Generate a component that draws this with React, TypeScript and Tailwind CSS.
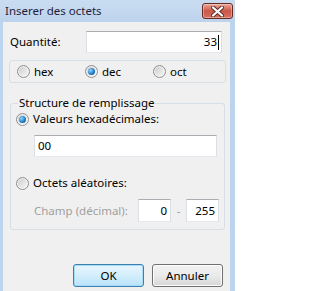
import React from 'react'

const font = { fontFamily: '"Noto Sans", "Open Sans", sans-serif' }

function Radio({ checked, disabled }: { checked?: boolean; disabled?: boolean }) {
  return (
    <span className="relative flex h-[13px] w-[13px] shrink-0 items-center justify-center rounded-full border border-[#8f8f8f] bg-gradient-to-br from-[#e6e6e6] to-[#fbfbfb]">
      <span className="h-[9px] w-[9px] rounded-full bg-gradient-to-br from-[#cfcfcf] to-[#f6f6f6]" />
      {checked && !disabled && (
        <span className="absolute h-[7px] w-[7px] rounded-full bg-[radial-gradient(circle_at_35%_35%,#8fd6ff,#1a77c0_60%,#0d4f8c)]" />
      )}
    </span>
  )
}

function TextBox({ value, className, align = 'left', caret }: { value: string; className: string; align?: 'left' | 'right'; caret?: boolean }) {
  return (
    <div
      className={`flex items-center border border-[#abadb3] border-l-[#dbdfe6] border-r-[#dbdfe6] border-b-[#e3e9ef] bg-white px-[3px] text-[11.5px] text-black ${align === 'right' ? 'justify-end' : 'justify-start'} ${className}`}
    >
      <span>{value}</span>
      {caret && <span className="ml-px h-[15px] w-px bg-black" />}
    </div>
  )
}

export default function App() {
  return (
    <div style={font} className="flex h-[291px] w-[235px] flex-col bg-[#bcd4ee] text-[11.5px] text-black">
      {/* Title bar */}
      <div className="flex h-[22px] shrink-0 items-start justify-between pl-[5px] pr-[2px] bg-gradient-to-b from-[#c9dcf1] to-[#bdd3ec]">
        <span className="mt-[3px] text-[11.5px] leading-[15px] text-[#1e1e3a]">Inserer des octets</span>
        <div className="mt-[3px] flex h-[16px] w-[31px] items-center justify-center rounded-[3px] border border-[#6a2a24] bg-gradient-to-b from-[#e9a99a] via-[#c9574a] to-[#d7705e] shadow-[inset_0_0_0_1px_rgba(255,255,255,0.35)]">
          <svg width="13" height="11" viewBox="0 0 13 11">
            <path d="M2 1.5 L11 9.5 M11 1.5 L2 9.5" stroke="#5b2a25" strokeWidth="4" strokeLinecap="round" />
            <path d="M2 1.5 L11 9.5 M11 1.5 L2 9.5" stroke="#ffffff" strokeWidth="2.2" strokeLinecap="round" />
          </svg>
        </div>
      </div>

      {/* Client area */}
      <div className="ml-[3px] mr-[5px] flex flex-1 flex-col bg-[#f0f0f0] px-[6px]">
        {/* Quantité */}
        <div className="mt-[9px] flex h-[22px] items-center justify-between pl-px pr-[2px]">
          <span>Quantité:</span>
          <TextBox value="33" align="right" caret className="h-[22px] w-[136px] pr-[2px]" />
        </div>

        {/* Base radios */}
        <div className="mt-[7px] flex h-[23px] w-[217px] items-center rounded-[3px] border border-[#d5dfe5] bg-[#f0f0f0] pl-[7px]">
          <div className="flex w-[68px] items-center gap-[4px]">
            <Radio />
            <span>hex</span>
          </div>
          <div className="flex w-[68px] items-center gap-[4px]">
            <Radio checked />
            <span>dec</span>
          </div>
          <div className="flex items-center gap-[4px]">
            <Radio />
            <span>oct</span>
          </div>
        </div>

        {/* Group box */}
        <div className="relative ml-px mt-[20px] h-[127px] w-[215px] rounded-[3px] border border-[#d5dfe5]">
          <span className="absolute -top-[9px] left-[7px] bg-[#f0f0f0] px-px leading-[16px]">Structure de remplissage</span>
          <div className="flex flex-col pl-[5px] pt-[7px]">
            <div className="flex h-[16px] items-center gap-[4px]">
              <Radio checked />
              <span>Valeurs hexadécimales:</span>
            </div>
            <TextBox value="00" className="ml-[18px] mt-[8px] h-[22px] w-[183px]" />
            <div className="mt-[18px] flex h-[16px] items-center gap-[4px]">
              <Radio />
              <span>Octets aléatoires:</span>
            </div>
            <div className="mt-[8px] flex h-[23px] items-center pl-[18px] text-[#a0a0a0]">
              <span className="w-[104px]">Champ (décimal):</span>
              <TextBox value="0" align="right" className="h-[23px] w-[33px]" />
              <span className="w-[15px] text-center">-</span>
              <TextBox value="255" align="right" className="h-[23px] w-[33px]" />
            </div>
          </div>
        </div>

        {/* Buttons */}
        <div className="mt-[34px] flex justify-end gap-[8px] pr-[1px]">
          <button className="flex h-[23px] w-[71px] items-center justify-center rounded-[3px] border border-[#3c7fb1] bg-gradient-to-b from-[#e9f6fd] via-[#d3eefc] to-[#b9e2f9] shadow-[inset_0_0_0_1px_#a7dbf6] text-[11.5px]">
            OK
          </button>
          <button className="flex h-[23px] w-[71px] items-center justify-center rounded-[3px] border border-[#707070] bg-gradient-to-b from-[#f2f2f2] via-[#ebebeb] to-[#d6d6d6] shadow-[inset_0_0_0_1px_#fcfcfc] text-[11.5px]">
            Annuler
          </button>
        </div>
      </div>
    </div>
  )
}
